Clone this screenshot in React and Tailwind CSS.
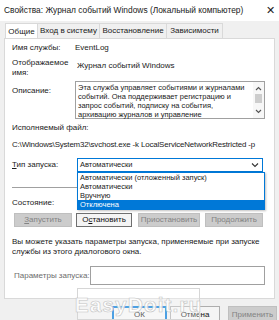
import React from "react";

const font = { fontFamily: '"Liberation Sans", Arial, sans-serif' };

function Btn({ children, disabled, className = "" }) {
  return (
    <div
      className={
        "flex items-center justify-center h-[14px] border text-[8px] whitespace-nowrap " +
        (disabled
          ? "bg-[#cccccc] border-[#bfbfbf] text-[#838383] "
          : "bg-[#f4f4f4] border-[#6f6f6f] text-[#111] ") +
        className
      }
    >
      {children}
    </div>
  );
}

export default function App() {
  return (
    <div className="w-[279px] h-[320px] overflow-hidden bg-[#f0f0f0] relative text-[#1a1a1a]" style={font}>
      {/* Title bar */}
      <div className="h-[21px] bg-white flex items-center justify-between pl-[4px] pr-[4px]">
        <span className="text-[8.4px] whitespace-nowrap">Свойства: Журнал событий Windows (Локальный компьютер)</span>
        <span className="text-[11px] leading-none text-[#222]">✕</span>
      </div>

      {/* Tabs */}
      <div className="flex items-end pl-[5px] h-[17px] whitespace-nowrap text-[8px]">
        <div className="h-[16px] w-[33px] bg-white border border-b-0 border-[#d9d9d9] flex items-center justify-center relative top-[1px]">Общие</div>
        <div className="h-[15px] w-[62px] border border-[#d9d9d9] border-l-0 border-b-0 flex items-center justify-center">Вход в систему</div>
        <div className="h-[15px] w-[67px] border border-[#d9d9d9] border-l-0 border-b-0 flex items-center justify-center">Восстановление</div>
        <div className="h-[15px] w-[56px] border border-[#d9d9d9] border-l-0 border-b-0 flex items-center justify-center">Зависимости</div>
      </div>

      {/* Panel */}
      <div className="mx-[4px] h-[261px] bg-white border border-[#d9d9d9] px-[7px] pt-[3px] text-[8px] leading-[10px] relative">
        <div className="flex items-center h-[12px]">
          <span className="w-[63px]">Имя службы:</span>
          <span>EventLog</span>
        </div>

        <div className="flex mt-[4px]">
          <span className="w-[63px]">Отображаемое<br />имя:</span>
          <span className="mt-[3px] ml-[2px]">Журнал событий Windows</span>
        </div>

        <div className="flex mt-[3px]">
          <span className="w-[63px] pt-[5px]">Описание:</span>
          <div className="w-[190px] h-[38px] border border-[#a0a0a0] flex">
            <div className="flex-1 pl-[2px] pt-[1px] text-[7.5px] leading-[9px]">
              Эта служба управляет событиями и журналами событий. Она поддерживает регистрацию и запрос событий, подписку на события, архивацию журналов и управление
            </div>
            <div className="w-[11px] flex flex-col items-center bg-[#f7f7f7]">
              <svg width="7" height="6" viewBox="0 0 7 6" className="mt-[4px]"><path d="M1 4 L3.5 1.5 L6 4" stroke="#555" fill="none" strokeWidth="1.1" /></svg>
              <div className="w-[7px] h-[9px] bg-[#cdcdcd] mt-[2px]" />
              <div className="flex-1" />
              <svg width="7" height="6" viewBox="0 0 7 6" className="mb-[4px]"><path d="M1 2 L3.5 4.5 L6 2" stroke="#555" fill="none" strokeWidth="1.1" /></svg>
            </div>
          </div>
        </div>

        <div className="mt-[4px]">Исполняемый файл:</div>
        <div className="mt-[7px] text-[7.9px] tracking-[-0.15px] whitespace-nowrap">C:\Windows\System32\svchost.exe -k LocalServiceNetworkRestricted -p</div>

        <div className="flex items-center mt-[8px]">
          <span className="w-[65px]">
            <span className="underline">Т</span>ип запуска:
          </span>
          <div className="w-[186px] h-[14px] border border-[#0078d7] bg-white flex items-center justify-between pl-[2px] pr-[3px] text-[7.5px]">
            <span>Автоматически</span>
            <svg width="8" height="6" viewBox="0 0 8 6"><path d="M1 1.5 L4 4.5 L7 1.5" stroke="#333" fill="none" strokeWidth="1.1" /></svg>
          </div>
        </div>

        <div className="mt-[15px] w-[65px] h-px bg-[#a0a0a0]" />

        <div className="mt-[10px] h-[10px]">Состояние:</div>

        <div className="flex mt-[5px] ml-[2px]">
          <Btn disabled className="w-[58px]"><span className="underline decoration-[#838383]">З</span>апустить</Btn>
          <Btn className="w-[56px] ml-[4px]">О<span className="underline">с</span>тановить</Btn>
          <Btn disabled className="w-[62px] ml-[6px]">Приостановить</Btn>
          <Btn disabled className="w-[58px] ml-[5px]">Продолжить</Btn>
        </div>

        <div className="mt-[10px] leading-[10px] whitespace-nowrap">
          Вы можете указать параметры запуска, применяемые при запуске<br />службы из этого диалогового окна.
        </div>

        <div className="flex items-center mt-[9px]">
          <span className="w-[78px] text-[#6d6d6d] pl-[2px] whitespace-nowrap">Параметры запуска:</span>
          <div className="w-[175px] h-[19px] border border-[#a0a0a0] bg-white" />
        </div>

        {/* Open dropdown list */}
        <div className="absolute left-[72px] top-[133px] w-[188px] border border-[#0078d7] bg-white text-[7.5px] leading-[9px] shadow-[1px_1px_2px_rgba(0,0,0,0.25)] whitespace-nowrap">
          <div className="pl-[2px]">Автоматически (отложенный запуск)</div>
          <div className="pl-[2px]">Автоматически</div>
          <div className="pl-[2px]">Вручную</div>
          <div className="pl-[2px] bg-[#0078d7] text-white">Отключена</div>
        </div>
      </div>

      {/* Bottom buttons */}
      <div className="flex justify-end pr-[2px] mt-[7px]">
        <Btn className="w-[55px] h-[17px] border-[#0078d7] border-2">ОК</Btn>
        <Btn className="w-[50px] h-[17px] ml-[3px] bg-[#e1e1e1] border-[#adadad]">Отмена</Btn>
        <Btn disabled className="w-[49px] h-[17px] ml-[8px]">Применить</Btn>
      </div>

      {/* Watermark */}
      <div className="absolute left-[77px] top-[288px] w-[123px] h-[32px] bg-white/30 border border-[#d6d6d6] flex justify-center pt-[5px]">
        <span className="text-[21px] leading-none font-bold text-white/85 tracking-[1px]" style={{ fontFamily: '"Liberation Sans", sans-serif', WebkitTextStroke: "0.6px #c4c4c4" }}>EasyDoit.ru</span>
      </div>
    </div>
  );
}
